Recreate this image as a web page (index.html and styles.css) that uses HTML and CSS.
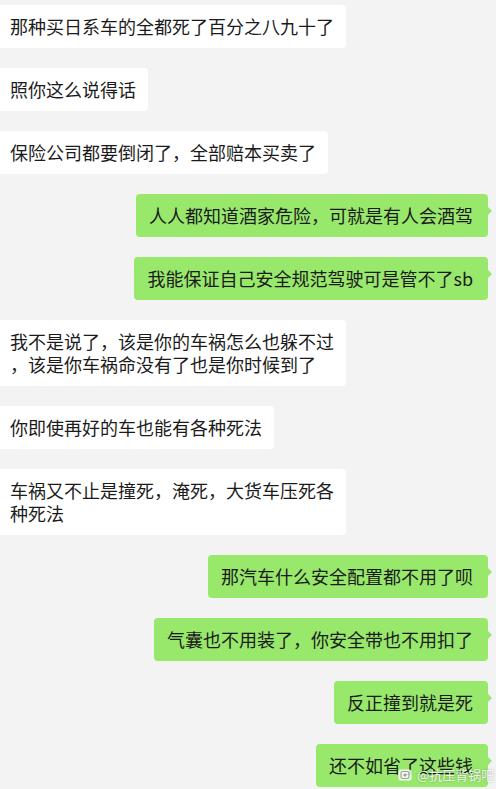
FILE: index.html
```html
<!DOCTYPE html>
<html lang="zh-CN">
<head>
<meta charset="utf-8">
<link rel="stylesheet" href="styles.css">
</head>
<body>
<div class="chat">
  <div class="row left"><div class="bubble">那种买日系车的全都死了百分之八九十了</div></div>
  <div class="row left"><div class="bubble">照你这么说得话</div></div>
  <div class="row left"><div class="bubble">保险公司都要倒闭了，全部赔本买卖了</div></div>
  <div class="row right"><div class="bubble">人人都知道酒家危险，可就是有人会酒驾</div></div>
  <div class="row right"><div class="bubble">我能保证自己安全规范驾驶可是管不了sb</div></div>
  <div class="row left"><div class="bubble">我不是说了，该是你的车祸怎么也躲不过<br>，该是你车祸命没有了也是你时候到了</div></div>
  <div class="row left"><div class="bubble">你即使再好的车也能有各种死法</div></div>
  <div class="row left"><div class="bubble">车祸又不止是撞死，淹死，大货车压死各<br>种死法</div></div>
  <div class="row right"><div class="bubble">那汽车什么安全配置都不用了呗</div></div>
  <div class="row right"><div class="bubble">气囊也不用装了，你安全带也不用扣了</div></div>
  <div class="row right"><div class="bubble">反正撞到就是死</div></div>
  <div class="row right"><div class="bubble">还不如省了这些钱</div></div>
</div>
<div class="watermark">
  <svg class="wm-icon" width="14" height="12" viewBox="0 0 14 12"><rect x="0.5" y="0.5" width="13" height="11" rx="2.5" fill="rgba(255,255,255,0.85)"/><rect x="3" y="2.5" width="8" height="7" rx="1.5" fill="none" stroke="rgba(150,150,150,0.9)" stroke-width="1.2"/><circle cx="7" cy="6" r="1.6" fill="rgba(150,150,150,0.9)"/></svg>
  <span>@抗压背锅吧</span>
</div>
</body>
</html>
```

FILE: styles.css
```css
html, body {
  margin: 0;
  padding: 0;
}
body {
  background: #f3f3f3;
  width: 496px;
  height: 789px;
  overflow: hidden;
  position: relative;
  font-family: "Noto Sans CJK SC", "Microsoft YaHei", sans-serif;
}
.chat {
  display: flex;
  flex-direction: column;
  gap: 20px;
  padding: 5px 8px 0 0;
}
.row {
  display: flex;
}
.row.left { justify-content: flex-start; }
.row.right { justify-content: flex-end; }
.bubble {
  position: relative;
  font-size: 18px;
  line-height: 23px;
  color: #1b1b1b;
  white-space: nowrap;
  padding: 10px 12px 10px 10px;
  border-radius: 4px;
}
.left .bubble {
  background: #ffffff;
  border-radius: 0 4px 4px 0;
}
.right .bubble {
  background: #98e86c;
  padding: 10px 15px 10px 13px;
}
.right .bubble::after {
  content: "";
  position: absolute;
  right: -4px;
  top: 13px;
  border-left: 4px solid #98e86c;
  border-top: 4px solid transparent;
  border-bottom: 4px solid transparent;
}
.watermark {
  position: absolute;
  left: 398px;
  top: 767px;
  display: flex;
  align-items: center;
  gap: 5px;
  font-size: 13px;
  line-height: 16px;
  color: rgba(255, 255, 255, 0.92);
  text-shadow: 0 0 2px rgba(0, 0, 0, 0.35);
  white-space: nowrap;
}
.wm-icon {
  display: block;
}
```
